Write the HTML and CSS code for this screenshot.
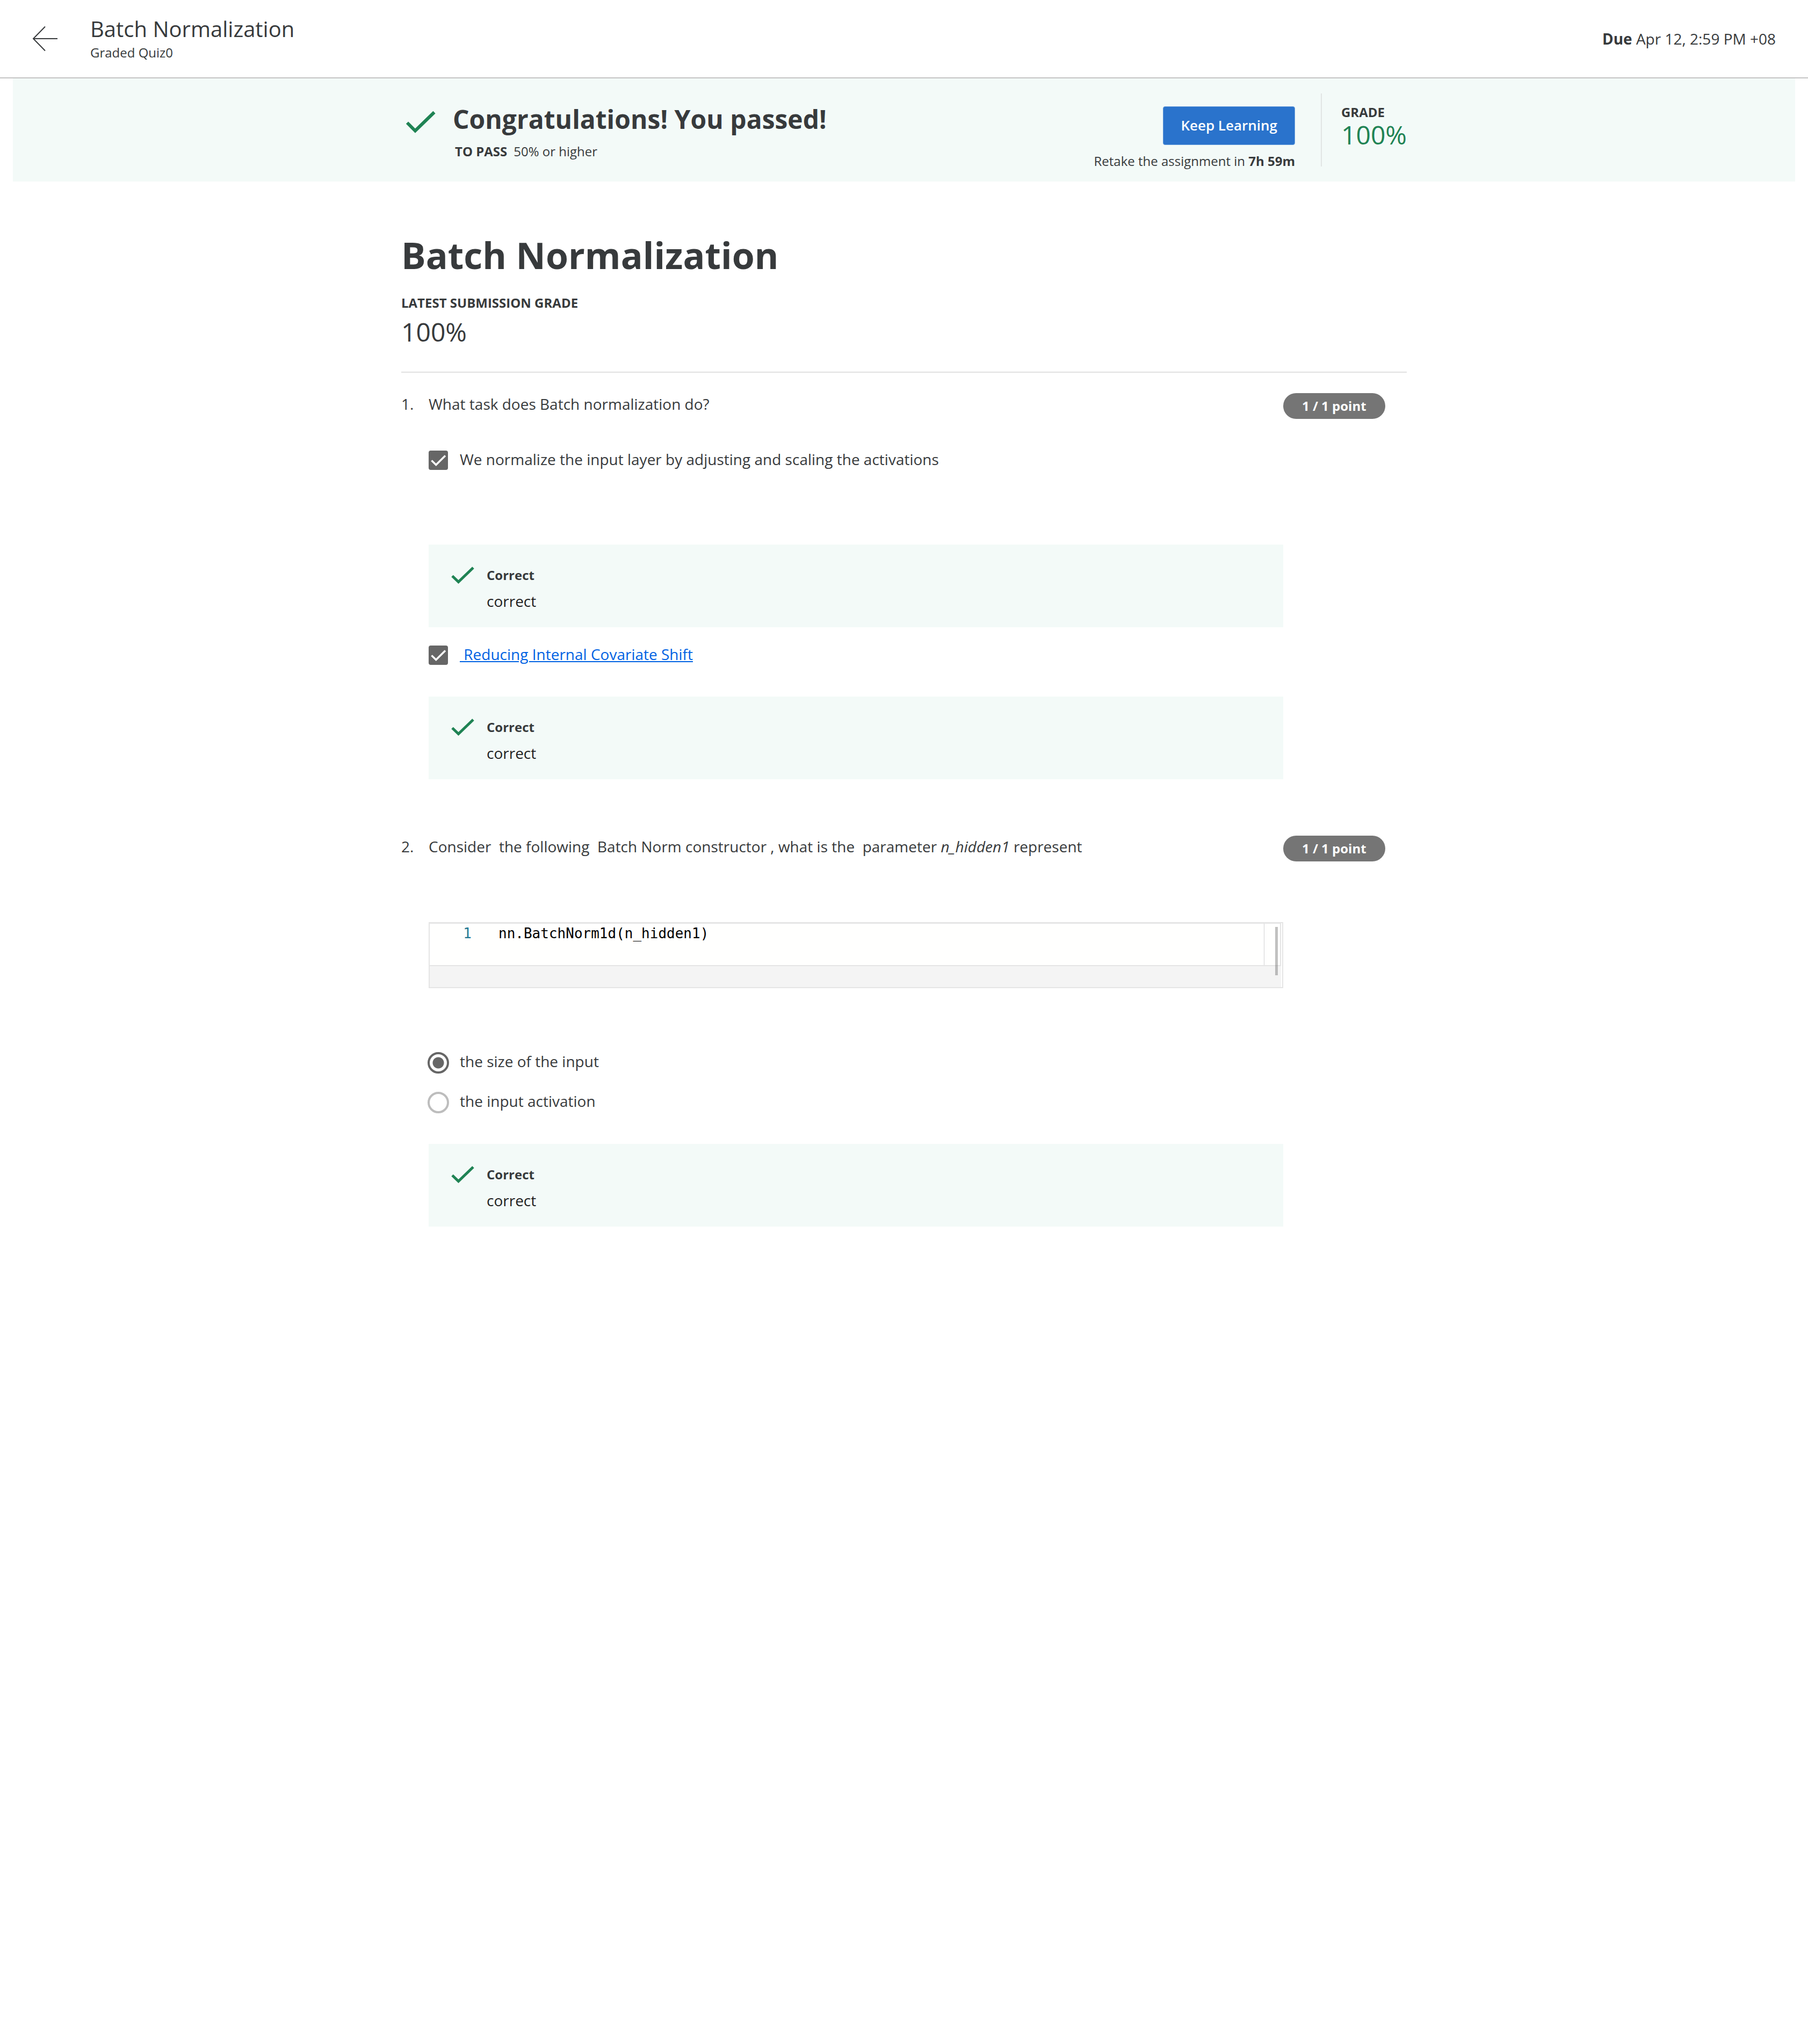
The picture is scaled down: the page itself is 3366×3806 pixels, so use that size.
FILE: index.html
```html
<!DOCTYPE html>
<html lang="en">
<head>
<meta charset="utf-8">
<meta name="viewport" content="width=device-width, initial-scale=1">
<title>Batch Normalization</title>
<link rel="stylesheet" href="styles.css">
</head>
<body>
<header class="topbar">
  <a class="back" href="#" aria-label="Back">
    <svg class="back-icon" viewBox="0 0 48 48" aria-hidden="true"><path d="M24 1.500L2 24L24 46.500M2 24H47"/></svg>
  </a>
  <div class="topbar-text">
    <div class="topbar-title">Batch Normalization</div>
    <div class="small">Graded Quiz0</div>
  </div>
  <div class="due"><strong>Due</strong> Apr 12, 2:59 PM +08</div>
</header>

<section class="banner">
  <div class="banner-inner">
    <svg class="banner-check" viewBox="0 0 72 64" aria-hidden="true"><path d="M11 38.500L26 53.500L61.500 19"/></svg>
    <div class="banner-message">
      <h2 class="banner-title">Congratulations! You passed!</h2>
      <p class="small to-pass"><strong>TO PASS</strong><span>50% or higher</span></p>
    </div>
    <div class="banner-actions">
      <button class="keep-learning" type="button">Keep Learning</button>
      <p class="small">Retake the assignment in <strong>7h 59m</strong></p>
    </div>
    <div class="banner-divider"></div>
    <div class="banner-grade">
      <div class="small"><strong>GRADE</strong></div>
      <div class="grade-value">100%</div>
    </div>
  </div>
</section>

<main class="quiz">
  <h1 class="quiz-title">Batch Normalization</h1>
  <div class="small latest"><strong>LATEST SUBMISSION GRADE</strong></div>
  <div class="latest-value">100%</div>

  <section class="question">
    <div class="number">1.</div>
    <div class="question-body">
      <p class="prompt">What task does Batch normalization do?</p>
      <div class="option option-tall">
        <input class="checkbox" type="checkbox" id="q1a" checked>
        <label for="q1a">We normalize the input layer by adjusting and scaling the activations</label>
      </div>
      <div class="feedback">
        <svg class="feedback-check" viewBox="0 0 44 32" aria-hidden="true"><path d="M2 17.500L13.500 28.500L41 2"/></svg>
        <div class="feedback-text">
          <div class="small"><strong>Correct</strong></div>
          <div class="feedback-note">correct</div>
        </div>
      </div>
      <div class="option option-next">
        <input class="checkbox" type="checkbox" id="q1b" checked>
        <label for="q1b"><a class="link" href="#">&nbsp;Reducing Internal Covariate Shift</a></label>
      </div>
      <div class="feedback">
        <svg class="feedback-check" viewBox="0 0 44 32" aria-hidden="true"><path d="M2 17.500L13.500 28.500L41 2"/></svg>
        <div class="feedback-text">
          <div class="small"><strong>Correct</strong></div>
          <div class="feedback-note">correct</div>
        </div>
      </div>
    </div>
    <div class="points">1 / 1 point</div>
  </section>

  <section class="question">
    <div class="number">2.</div>
    <div class="question-body">
      <p class="prompt">Consider&nbsp; the following&nbsp; Batch Norm constructor , what is the&nbsp; parameter <em>n_hidden1</em> represent</p>
      <div class="code">
        <div class="code-editor">
          <span class="code-number">1</span>
          <code class="code-line">nn.BatchNorm1d(n_hidden1)</code>
          <span class="code-ruler"></span>
        </div>
        <div class="code-footer"></div>
        <span class="code-scroll"></span>
      </div>
      <div class="options">
        <div class="option">
          <input class="radio" type="radio" name="q2" id="q2a" checked>
          <label for="q2a">the size of the input</label>
        </div>
        <div class="option">
          <input class="radio" type="radio" name="q2" id="q2b">
          <label for="q2b">the input activation</label>
        </div>
      </div>
      <div class="feedback">
        <svg class="feedback-check" viewBox="0 0 44 32" aria-hidden="true"><path d="M2 17.500L13.500 28.500L41 2"/></svg>
        <div class="feedback-text">
          <div class="small"><strong>Correct</strong></div>
          <div class="feedback-note">correct</div>
        </div>
      </div>
    </div>
    <div class="points">1 / 1 point</div>
  </section>
</main>
</body>
</html>
```
FILE: styles.css
```css
* { box-sizing: border-box; }

body {
  margin: 0;
  background: #fff;
  color: #373a3c;
  font: 28px/40px "Open Sans", sans-serif;
}

h1, h2, p { margin: 0; }

strong { font-weight: 700; }

.small { font-size: 24px; line-height: 32px; }

/* Top bar */
.topbar {
  display: flex;
  align-items: center;
  height: 146px;
  padding: 0 60px;
  border-bottom: 2px solid #c4c4c4;
}
.back { display: block; margin-right: 60px; }
.back-icon { display: block; width: 48px; height: 48px; }
.back-icon path { fill: none; stroke: #373a3c; stroke-width: 2; }
.topbar-text { display: flex; flex-direction: column; gap: 4px; }
.topbar-title { font-size: 40px; line-height: 48px; }
.due { margin-left: auto; }

/* Result banner */
.banner { margin: 0 24px; background: #f3faf8; }
.banner-inner {
  display: flex;
  align-items: flex-start;
  max-width: 1872px;
  min-height: 192px;
  margin: 0 auto;
}
.banner-check { width: 72px; height: 64px; margin: 44px 24px 0 0; }
.banner-check path { fill: none; stroke: #1f8354; stroke-width: 6; }
.banner-message { padding-top: 44px; }
.banner-title { font-size: 48px; line-height: 64px; font-weight: 700; }
.to-pass { display: flex; gap: 12px; margin-top: 12px; padding-left: 4px; }
.banner-actions {
  display: flex;
  flex-direction: column;
  align-items: flex-end;
  gap: 14px;
  margin-left: auto;
  padding-top: 52px;
}
.keep-learning {
  height: 72px;
  padding: 0 32px 2px;
  border: 1px solid #6a9edb;
  border-radius: 4px;
  background: #2a73cc;
  color: #fff;
  font: 600 26px/40px "Open Sans", sans-serif;
}
.banner-divider { width: 2px; height: 136px; margin: 28px 36px 0 48px; background: #e1e5e4; }
.banner-grade { padding-top: 47px; }
.grade-value { font-size: 48px; line-height: 52px; color: #1f8354; }

/* Quiz */
.quiz { max-width: 1872px; margin: 0 auto; padding-top: 92px; }
.quiz-title { font-size: 68px; line-height: 90px; font-weight: 700; }
.latest { margin-top: 28px; }
.latest-value {
  margin-top: 8px;
  padding-bottom: 44px;
  border-bottom: 2px solid #e1e1e1;
  font-size: 48px;
  line-height: 60px;
}

.question {
  display: grid;
  grid-template-columns: 51px minmax(0, 1fr) 230px;
  align-items: start;
  padding-top: 38px;
}
.question + .question { padding-top: 105px; }
.points {
  justify-self: start;
  padding: 0 35px;
  border-radius: 24px;
  background: #757575;
  color: #fff;
  font-size: 24px;
  line-height: 48px;
  font-weight: 700;
}

/* Answer options */
.option { display: flex; align-items: flex-start; gap: 22px; }
.option-tall { margin-top: 63px; padding-bottom: 80px; }
.option-next { margin-top: 30px; }
.options { display: flex; flex-direction: column; gap: 31px; margin-top: 116px; }

.checkbox, .radio { appearance: none; flex: none; background: #fff; }
.checkbox {
  width: 36px;
  height: 36px;
  margin: 4px 0 0;
  border-radius: 4px;
  background: #666 url("data:image/svg+xml,%3Csvg xmlns='http://www.w3.org/2000/svg' viewBox='0 0 36 36'%3E%3Cpath d='M5.500 18.500L13.800 26.500L31 9.500' fill='none' stroke='%23fff' stroke-width='3.500'/%3E%3C/svg%3E");
}
.radio {
  width: 40px;
  height: 40px;
  margin: 3px -2px 0;
  border: 4px solid #bdbdbd;
  border-radius: 50%;
}
.radio:checked {
  border-color: #666;
  background: radial-gradient(circle, #666 10px, #fff 11px);
}
.link { color: #0062e3; }

/* Feedback */
.feedback {
  display: flex;
  gap: 22px;
  margin-top: 59px;
  padding: 41px 42px 29px;
  background: #f3faf8;
}
.options + .feedback { margin-top: 57px; }
.feedback-check { flex: none; width: 44px; height: 32px; }
.feedback-check path { fill: none; stroke: #1f8354; stroke-width: 5; }
.feedback-text { display: flex; flex-direction: column; gap: 12px; }
.feedback-note { color: #1f1f1f; }

/* Code block */
.code {
  position: relative;
  margin-top: 121px;
  padding-right: 2px;
  border: 2px solid #e5e5e5;
}
.code-editor {
  display: flex;
  height: 80px;
  padding-top: 2px;
  border: solid #e5e5e5;
  border-width: 1px 2px 2px 0;
  background: #fffffe;
  font: 26px/32px "DejaVu Sans Mono", monospace;
  color: #000;
}
.code-number { width: 78px; margin-right: 50px; text-align: right; color: #237893; }
.code-line { flex: 1; font: inherit; }
.code-ruler { width: 30px; margin-top: -2px; border-left: 1px solid #d3d3d3; }
.code-footer { height: 39px; background: #f4f4f4; }
.code-scroll {
  position: absolute;
  top: 7px;
  right: 8px;
  width: 5px;
  height: 90px;
  background: rgba(100, 100, 100, .4);
}
```
